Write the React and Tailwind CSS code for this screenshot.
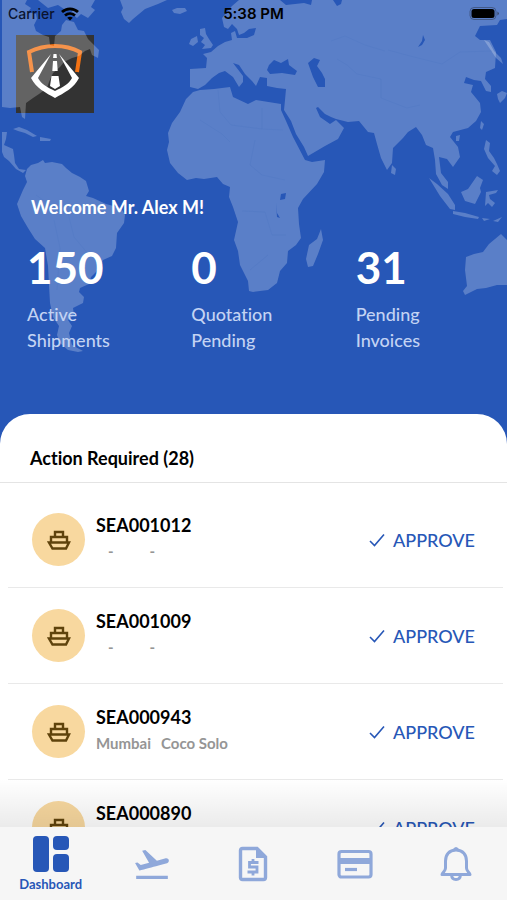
import { useState } from 'react';
import { MdFlightTakeoff } from 'react-icons/md';

const stats = [
  { value: '150', label: 'Active Shipments' },
  { value: '0', label: 'Quotation Pending' },
  { value: '31', label: 'Pending Invoices' },
];

const shipments = [
  { id: 'SEA001012', from: '-', to: '-' },
  { id: 'SEA001009', from: '-', to: '-' },
  { id: 'SEA000943', from: 'Mumbai', to: 'Coco Solo' },
  { id: 'SEA000890', from: '', to: '' },
];

function WorldMap() {
  return (
    <svg
      viewBox="0 0 507 414"
      preserveAspectRatio="xMidYMin slice"
      className="absolute inset-0 h-full w-full pointer-events-none"
      aria-hidden="true"
    >
      <g fill="#fff" fillOpacity="0.24">
        {/* north america, central america, caribbean */}
        <path d="M2 0H27L25 4 31 8 28 12 36 14 37 19 34 25 36 31 43 35 49 37 50 45 54 46 55 36 61 31 62 25 66 20 74 22 78 30 84 31 88 39 93 44 99 50 98 58 92 55 90 49 85 51 79 56 72 58 64 62 60 67 53 73 49 82 47 88 39 94 33 98 26 103 25 119 22 117 20 107 10 108 2 107Z" />
        <path d="M38 0H95L91 7 95 10 88 18 81 14 77 18 71 13 74 8 64 9 58 5 48 8Z" />
        <path d="M2 132 7 132 6 139 4 145 13 149 14 155 15 163 19 169 26 170 23 173 16 169 9 161 4 157 2 152Z" />
        <path d="M13 129 19 127 27 130 37 136 33 137 25 133 18 131ZM40 137 51 139 50 141 40 141Z" />
        {/* south america */}
        <path d="M27 169 31 165 38 163 43 160 45 163 52 162 62 164 66 168 72 173 80 177 86 181 89 191 86 196 93 198 106 204 121 208 125 215 124 223 117 233 116 248 112 256 103 260 97 271 91 277 89 284 80 288 79 292 84 297 83 303 73 308 74 315 68 320 72 326 69 333 72 345 83 351 78 352 68 350 60 343 57 335 59 326 53 317 50 303 49 285 48 266 45 248 35 239 28 228 21 216 17 204 20 197 23 190 27 182 25 176Z" />
        {/* greenland, iceland, british isles */}
        <path d="M120 0H167L158 4 145 9 139 14 133 19 129 23 124 19 121 12 123 8ZM172 10 177 8 185 8 187 11 180 14 174 13Z" />
        <path d="M200 29 205 28 206 34 209 39 213 45 211 48 202 49 205 45 201 42 204 38 200 35ZM191 39 197 36 198 42 193 46 189 44Z" />
        {/* europe and asia */}
        <path d="M190 69 206 68 207 58 203 54 211 52 218 46 225 42 232 40 231 33 235 31 237 38 247 38 254 35 256 28 249 29 244 33 239 35 237 29 232 24 228 29 224 27 222 18 226 13 232 6 239 0H280L286 5 304 3 311 5 312 0H333L337 6 341 4 342 0H507V19L500 20 497 25 480 26 475 36 480 40 490 40 496 52 495 68 486 72 485 79 491 86 491 92 486 91 481 81 474 80 466 77 464 83 473 85 471 92 480 103 481 112 476 121 468 128 453 132 450 137 458 147 460 157 453 167 447 159 439 157 441 173 448 182 448 189 442 185 436 174 435 160 433 148 426 145 422 135 416 127 408 132 403 138 393 148 392 163 387 170 381 158 377 144 374 133 368 132 359 121 348 122 336 119 331 117 325 114 318 107 316 108 320 117 330 124 336 120 344 128 338 139 325 146 308 156 304 147 296 134 291 121 284 110 285 100 286 89 277 88 267 86 267 78 260 77 256 86 252 81 245 74 239 65 233 63 243 76 243 82 239 87 233 77 225 71 219 73 212 78 205 85 198 89 190 87Z" />
        {/* africa */}
        <path d="M193 92 200 90 214 89 230 87 233 97 248 104 256 100 281 104 281 110 286 121 293 137 305 160 312 162 325 160 324 172 317 184 303 199 298 208 299 224 301 238 296 245 288 251 287 263 280 271 277 283 268 290 253 292 249 291 248 281 240 265 238 251 234 240 238 222 233 207 229 197 230 187 223 184 217 177 204 179 196 178 187 180 178 173 170 163 167 150 169 142 168 133 172 123 180 112 186 99Z" />
        <path d="M321 229 323 240 318 254 313 266 308 267 306 259 309 245 317 239Z" />
        {/* islands of the far east */}
        <path d="M392 165 396 169 395 175 391 173ZM429 178 437 184 448 194 455 205 455 210 450 209 440 196ZM453 211 465 213 479 217 478 219 465 217 453 214ZM461 192 468 189 477 176 483 180 480 188 481 192 475 204 465 201ZM486 192 498 190 496 193 489 195 490 199 495 203 492 207 488 203 485 206ZM482 218 490 219 484 221ZM493 221 502 217 498 222Z" />
        <path d="M456 136 460 135 459 141 456 141ZM481 121 484 124 482 130 480 128ZM486 140 490 143 489 151 494 158 497 164 500 171 497 175 492 171 495 166 488 158 484 149ZM484 40 489 42 494 51 501 58 503 64 496 58 490 49ZM497 94 502 91 507 93 505 98 500 103 498 99Z" />
        <path d="M501 234 507 240V285L497 285 486 288 477 289 465 295 463 291 467 286 465 270 466 257 474 254 483 252 489 244 495 239Z" />
      </g>
      {/* inland seas and lakes */}
      <g fill="#2757b7">
        <path d="M269 65 274 60 281 63 288 59 289 65 297 71 295 75 282 73 270 74 267 70ZM308 63 314 58 320 60 317 66 322 73 325 79 325 87 318 87 313 77ZM423 35 425 40 422 45 418 47 422 41ZM281 194 286 193 285 199 280 200ZM276 203 277 213 280 218 277 217Z" />
      </g>
      <g fill="none" stroke="#4a72c0" strokeWidth="0.6" strokeOpacity="0.4">
        <path d="M331 41 345 36 365 45 385 51M388 50 410 56 442 64 460 52 492 51M337 59 347 65 357 74 381 79 381 98 407 108 420 105M262 108V129L283 130M200 120 222 134 230 142M255 140 250 165 262 175 285 180M242 211 265 212 272 235 286 235M250 270 268 255M36 195 50 205 68 213 74 237 89 255M54 220 60 248 57 290M218 90 220 112 231 125 262 129" />
      </g>
    </svg>
  );
}

function Logo() {
  return (
    <svg viewBox="0 0 78 78" className="h-[78px] w-[78px]" role="img" aria-label="Company logo">
      <rect width="78" height="78" fill="#333333" />
      <path d="M16 37 13 17C29 9 49 9 64 17L61 37" fill="none" stroke="#f47213" strokeWidth="4" />
      <path d="M35 19 15 43C20 53 30 58 39 63C48 58 58 53 63 43L43 19 56 43C53 49 47 52 39 56C31 52 25 49 22 43Z" fill="#fff" />
      <path d="M37.500 19h3l.4 4h-3.800ZM37 26h4l.7 10h-5.400ZM35.500 41h7l1.500 10-5 3-5-3Z" fill="#fff" />
    </svg>
  );
}

function ShipIcon() {
  return (
    <svg viewBox="0 0 24 20" className="h-5 w-6" fill="none" stroke="#5f430c" strokeWidth="2.400" aria-hidden="true">
      <path d="M8 7V2H16V7M4 12V7H20V12M2 12.500H22L19 18.500H5.500Z" />
    </svg>
  );
}

function CheckIcon() {
  return (
    <svg viewBox="0 0 16 14" className="h-3.5 w-4" fill="none" stroke="currentColor" strokeWidth="1.600" aria-hidden="true">
      <path d="M1 8 5.500 12.500 15 1.500" />
    </svg>
  );
}

function DashboardIcon() {
  return (
    <svg viewBox="0 0 36 36" className="h-9 w-9" fill="currentColor" aria-hidden="true">
      <rect x="0" y="0" width="16" height="36" rx="4" />
      <rect x="20" y="0" width="16" height="14" rx="4" />
      <rect x="20" y="18" width="16" height="18" rx="4" />
    </svg>
  );
}

function InvoiceIcon() {
  return (
    <svg viewBox="0 0 36 36" className="h-9 w-9" fill="none" stroke="currentColor" strokeWidth="3.400" aria-hidden="true">
      <path d="M7.500 2.500H22L30.500 11V31.500Q30.500 33.500 28.500 33.500H7.500Q5.500 33.500 5.500 31.500V4.500Q5.500 2.500 7.500 2.500Z" />
      <path d="M21 2 31 12H21Z" fill="currentColor" stroke="none" />
      <path d="M23.500 16.500H14.500V21H22V26H12.500M18 13V16.500M18 26V29.500" strokeWidth="2.800" />
    </svg>
  );
}

function CardIcon() {
  return (
    <svg viewBox="0 0 36 36" className="h-9 w-9" fill="none" stroke="currentColor" strokeWidth="3.200" aria-hidden="true">
      <rect x="2" y="5.500" width="32" height="25.500" rx="2.500" />
      <path d="M2 15H34" strokeWidth="6" />
      <path d="M8 23.500H20" />
    </svg>
  );
}

function BellIcon() {
  return (
    <svg viewBox="0 0 36 36" className="h-9 w-9" fill="none" stroke="currentColor" strokeWidth="3" strokeLinejoin="round" aria-hidden="true">
      <path d="M18 4C11 4 7.500 9 7.500 15V22C7.500 25 5 26 4 28.500H32C31 26 28.500 25 28.500 22V15C28.500 9 25 4 18 4Z" />
      <path d="M13.500 29C14 35 22 35 22.500 29" />
      <path d="M14.500 4Q18 -2 21.500 4Z" fill="currentColor" stroke="none" />
    </svg>
  );
}

const tabs = [
  { name: 'Dashboard', icon: <DashboardIcon /> },
  { name: 'Bookings', icon: <MdFlightTakeoff size={40} /> },
  { name: 'Invoices', icon: <InvoiceIcon /> },
  { name: 'Payments', icon: <CardIcon /> },
  { name: 'Notifications', icon: <BellIcon /> },
];

function StatusBar() {
  return (
    <div className="relative z-10 grid h-7 grid-cols-3 items-center px-2 font-[Inter,sans-serif] text-sm text-[#0b1430]">
      <div className="flex items-center gap-1.5">
        <span className="font-medium">Carrier</span>
        <svg viewBox="0 0 18 14" className="h-3.5 w-[18px]" fill="none" stroke="#000" strokeWidth="2.800" aria-hidden="true">
          <path d="M1 5C5.500 .8 12.500 .8 17 5M4 8.500C7 5.900 11 5.900 14 8.500" />
          <path d="M9 13.500 6.200 10.700Q9 8.700 11.800 10.700Z" fill="#000" stroke="none" />
        </svg>
      </div>
      <span className="text-center text-[15px] font-semibold text-black">5:38 PM</span>
      <svg viewBox="0 0 30 14" className="h-3.5 w-[30px] justify-self-end" aria-hidden="true">
        <rect x="1" y="0.500" width="26" height="12" rx="4" fill="none" stroke="#33415f" strokeOpacity="0.6" />
        <rect x="2.500" y="2" width="23" height="9" rx="2.500" fill="#000" />
        <path d="M28.500 4.500Q31 6.500 28.500 8.500Z" fill="#33415f" />
      </svg>
    </div>
  );
}

function ShipmentRow({ shipment, onApprove }) {
  const noRoute = shipment.from === '-';
  return (
    <li className="mr-1 ml-2 flex h-24 items-center border-b border-[#e9e9e9] pr-7 pl-6">
      <div className="flex h-[53px] w-[53px] shrink-0 items-center justify-center rounded-full bg-[#f8d89f]">
        <ShipIcon />
      </div>
      <div className="ml-[11px] flex-1 pb-1.5">
        <div className="text-lg leading-7 font-bold text-black">{shipment.id}</div>
        <div className={`flex h-6 text-[15px] leading-6 font-bold text-[#959595] ${noRoute ? 'gap-9 pl-3' : 'gap-2.5'}`}>
          {shipment.from && <span>{shipment.from}</span>}
          {shipment.to && <span>{shipment.to}</span>}
        </div>
      </div>
      <button onClick={() => onApprove(shipment.id)} className="flex items-center gap-2 text-lg font-medium text-[#2757b7]">
        <CheckIcon /> APPROVE
      </button>
    </li>
  );
}

export default function App() {
  const [activeTab, setActiveTab] = useState('Dashboard');
  const [approved, setApproved] = useState([]);

  const handleApprove = (id) => setApproved([...approved, id]);
  const pending = shipments.filter((s) => !approved.includes(s.id));

  return (
    <div className="flex h-screen flex-col overflow-hidden bg-[#2757b7] font-[Lato,sans-serif] [font-variant-ligatures:none]">
      <header className="relative shrink-0 pb-[61px]">
        <StatusBar />
        <div className="px-4 pt-[7px]">
          <Logo />
        </div>
        <WorldMap />
        <div className="relative z-10 px-[27px] pt-20 text-white">
          <h1 className="pl-1 text-lg leading-7 font-bold">Welcome Mr. Alex M!</h1>
          <dl className="mt-4 grid grid-cols-3 gap-10">
            {stats.map((stat) => (
              <div key={stat.label} className="flex flex-col-reverse">
                <dt className="mt-1 w-24 text-lg leading-[26px] font-medium text-[#c3d3f3]">{stat.label}</dt>
                <dd className="text-[44px] leading-[60px] font-bold">{stat.value}</dd>
              </div>
            ))}
          </dl>
        </div>
      </header>

      <main className="relative min-h-0 flex-1 overflow-hidden rounded-t-[30px] bg-white">
        <h2 className="border-b border-[#e4e4e4] pt-[30px] pb-[10px] pl-[30px] text-lg leading-7 font-bold text-black">
          Action Required (28)
        </h2>
        <ul className="pt-[9px]">
          {pending.map((s) => (
            <ShipmentRow key={s.id} shipment={s} onApprove={handleApprove} />
          ))}
        </ul>
        <div className="absolute inset-x-0 bottom-0 h-12 bg-linear-to-t from-black/8 to-transparent pointer-events-none" />
      </main>

      <nav className="grid h-[73px] shrink-0 grid-cols-5 bg-[#f6f6f6]">
        {tabs.map((tab) => (
          <button
            key={tab.name}
            aria-label={tab.name}
            onClick={() => setActiveTab(tab.name)}
            className={`flex flex-col items-center justify-center ${activeTab === tab.name ? 'text-[#2757b7]' : 'text-[#8fa8da]'}`}
          >
            {tab.icon}
            {activeTab === tab.name && <span className="mt-1 text-[13px] leading-4 font-bold">{tab.name}</span>}
          </button>
        ))}
      </nav>
    </div>
  );
}
